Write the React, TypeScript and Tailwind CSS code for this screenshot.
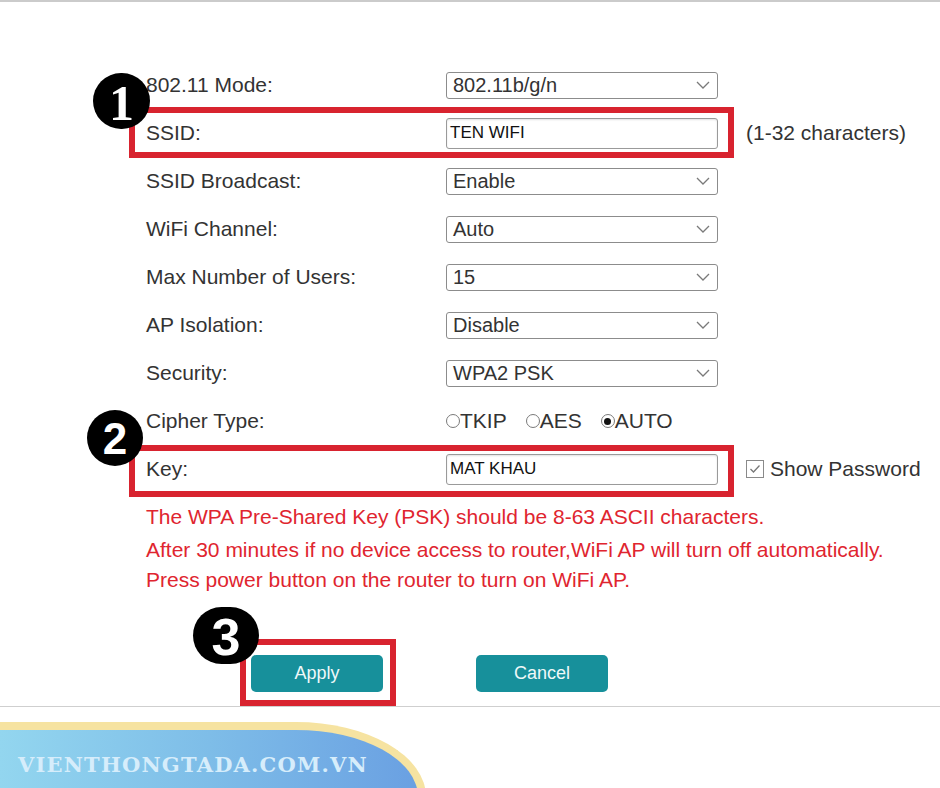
import React from "react";

const Chevron = () => (
  <svg width="14" height="8" viewBox="0 0 14 8" fill="none" className="mr-[7px]">
    <polyline points="1,1 7,7 13,1" stroke="#7a7a7a" strokeWidth="1.3" />
  </svg>
);

const Select = ({ value }: { value: string }) => (
  <div className="flex h-[27px] w-[272px] items-center justify-between rounded-[3px] border border-[#8c8c8c] bg-white pl-[6px] text-[20px] text-[#333]">
    <span>{value}</span>
    <Chevron />
  </div>
);

const TextBox = ({ value }: { value: string }) => (
  <div className="flex h-[31px] w-[272px] items-center rounded-[3px] border border-[#9a9a9a] bg-white pl-[3px] text-[17px] text-[#111] shadow-[inset_0_1px_2px_rgba(0,0,0,0.12)]">
    {value}
  </div>
);

const Radio = ({ label, checked }: { label: string; checked?: boolean }) => (
  <span className="flex items-center">
    <span className="flex h-[14px] w-[14px] items-center justify-center rounded-full border border-[#7a7a7a] bg-white">
      {checked && <span className="h-[7px] w-[7px] rounded-full bg-[#111]" />}
    </span>
    <span>{label}</span>
  </span>
);

const Badge = ({ n, serif, className }: { n: string; serif?: boolean; className: string }) => (
  <div
    className={`absolute flex items-center justify-center rounded-full bg-black font-bold leading-none text-white ${
      serif ? "font-['Liberation_Serif',serif]" : "font-['Liberation_Sans',Arial,sans-serif]"
    } ${className}`}
  >
    {n}
  </div>
);

const Row = ({ label, children }: { label: string; children: React.ReactNode }) => (
  <div className="relative flex h-[48px] items-center pl-[146px]">
    <span className="w-[300px] text-[21px] text-[#333]">{label}</span>
    {children}
  </div>
);

export default function App() {
  return (
    <div className="relative h-[788px] w-[940px] overflow-hidden bg-white font-['Liberation_Sans',Arial,sans-serif]">
      <div className="h-[2px] bg-[#cbcbcb]" />

      {/* form rows */}
      <div className="pt-[59px]">
        <div className="relative">
          <Row label="802.11 Mode:">
            <Select value="802.11b/g/n" />
          </Row>
          <Badge n="1" serif className="left-[93px] top-[12px] z-10 h-[56px] w-[57px] pt-[4px] text-[50px]" />
        </div>

        <div className="relative">
          <span className="pointer-events-none absolute left-[129px] top-[-2px] h-[51px] w-[605px] border-[6px] border-[#d8232f]" />
          <Row label="SSID:">
            <TextBox value="TEN WIFI" />
            <span className="ml-[28px] text-[21px] text-[#333]">(1-32 characters)</span>
          </Row>
        </div>

        <Row label="SSID Broadcast:">
          <Select value="Enable" />
        </Row>
        <Row label="WiFi Channel:">
          <Select value="Auto" />
        </Row>
        <Row label="Max Number of Users:">
          <Select value="15" />
        </Row>
        <Row label="AP Isolation:">
          <Select value="Disable" />
        </Row>
        <Row label="Security:">
          <Select value="WPA2 PSK" />
        </Row>

        <div className="relative">
          <Row label="Cipher Type:">
            <div className="flex items-center gap-[19px] text-[21px] text-[#333]">
              <Radio label="TKIP" />
              <Radio label="AES" />
              <Radio label="AUTO" checked />
            </div>
          </Row>
          <Badge n="2" className="left-[87px] top-[13px] z-10 h-[56px] w-[56px] pt-[2px] text-[44px]" />
        </div>

        <div className="relative">
          <span className="pointer-events-none absolute left-[129px] top-0 h-[52px] w-[605px] border-[6px] border-[#d8232f]" />
          <Row label="Key:">
            <TextBox value="MAT KHAU" />
            <span className="ml-[28px] flex items-center text-[21px] text-[#333]">
              <span className="mr-[6px] flex h-[18px] w-[18px] items-center justify-center border border-[#8a8a8a] bg-white">
                <svg width="12" height="10" viewBox="0 0 12 10" fill="none">
                  <polyline points="1.5,5 4.5,8 10.5,1.5" stroke="#777" strokeWidth="1.3" />
                </svg>
              </span>
              Show Password
            </span>
          </Row>
        </div>
      </div>

      {/* notes */}
      <div className="mt-[10px] pl-[146px] text-[21px] text-[#e0252f]">
        <p className="leading-[28px]">The WPA Pre-Shared Key (PSK) should be 8-63 ASCII characters.</p>
        <p className="mt-[5px] leading-[28px]">
          After 30 minutes if no device access to router,WiFi AP will turn off automatically.
        </p>
        <p className="mt-[2px] leading-[28px]">Press power button on the router to turn on WiFi AP.</p>
      </div>

      {/* buttons */}
      <div className="relative mt-[61px] flex pl-[251px]">
        <span className="pointer-events-none absolute left-[240px] top-[-16px] h-[67px] w-[156px] border-[6px] border-[#d8232f]" />
        <Badge n="3" className="left-[193px] top-[-48px] z-10 h-[57px] w-[66px] pt-[2px] text-[52px]" />
        <button className="h-[37px] w-[132px] rounded-[5px] bg-[#17909b] text-[18px] text-[#eef8f9]">Apply</button>
        <button className="ml-[93px] h-[37px] w-[132px] rounded-[5px] bg-[#17909b] text-[18px] text-[#eef8f9]">Cancel</button>
      </div>

      <div className="mt-[14px] h-px bg-[#cfcfcf]" />

      {/* watermark banner */}
      <div className="mt-[15px] h-[80px] w-[426px] rounded-tr-[130px_75px] border-r-[8px] border-t-[8px] border-[#f6e3a1] bg-gradient-to-r from-[#93d6ef] via-[#7ebde8] to-[#6aa0e2] pl-[18px] pt-[24px]">
        <span className="font-['DejaVu_Serif',serif] text-[21px] font-bold leading-none tracking-[1.2px] text-[#d6edfb]">
          VIENTHONGTADA.COM.VN
        </span>
      </div>
    </div>
  );
}
